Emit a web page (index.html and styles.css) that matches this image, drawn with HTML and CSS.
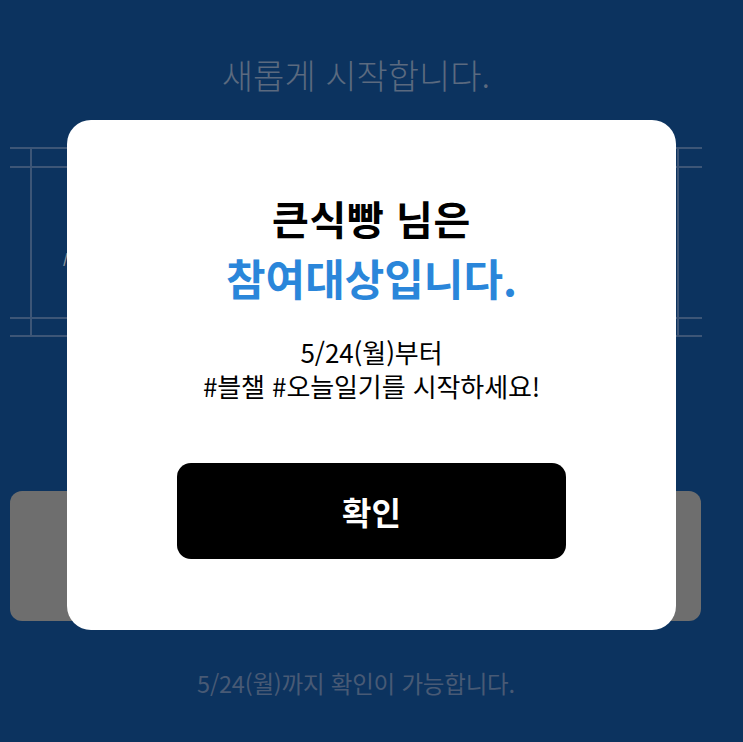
FILE: index.html
```html
<!DOCTYPE html>
<html lang="ko">
<head>
<meta charset="utf-8">
<link rel="stylesheet" href="styles.css">
</head>
<body>
<main class="page">
  <h2 class="headline">새롭게 시작합니다.</h2>
  <section class="frame">
    <div class="frame-inner">
      <span class="peek">/</span>
    </div>
  </section>
  <div class="ghost-button"></div>
  <p class="footnote">5/24(월)까지 확인이 가능합니다.</p>
</main>

<div class="overlay">
  <div class="modal">
    <h1 class="modal-title">
      <span class="line-black">큰식빵 님은</span>
      <span class="line-blue">참여대상입니다.</span>
    </h1>
    <p class="modal-text">5/24(월)부터<br>#블챌 #오늘일기를 시작하세요!</p>
    <button class="confirm">확인</button>
  </div>
</div>
</body>
</html>
```

FILE: styles.css
```css
* { box-sizing: border-box; }
html, body {
  margin: 0;
  padding: 0;
  background: #0c335f;
  font-family: "Noto Sans CJK KR", "Noto Sans", sans-serif;
}
body { width: 743px; height: 742px; overflow: hidden; }

.page {
  width: 712px;
  display: flex;
  flex-direction: column;
  padding: 0 10px;
}

.headline {
  margin: 55px 0 0;
  text-align: center;
  font-size: 34px;
  line-height: 40px;
  font-weight: 300;
  color: #5b6a7f;
}

.frame {
  position: relative;
  margin-top: 52px;
  height: 190px;
  border-top: 2px solid #3d5677;
  border-bottom: 2px solid #3d5677;
  padding-top: 17px;
}
.frame::before {
  content: "";
  position: absolute;
  top: -2px;
  bottom: -2px;
  left: 20px;
  right: 23px;
  border-left: 2px solid #3d5677;
  border-right: 2px solid #3d5677;
}
.frame-inner {
  height: 153px;
  border-top: 2px solid #3d5677;
  border-bottom: 2px solid #3d5677;
  position: relative;
}
.peek {
  position: absolute;
  left: 53px;
  top: 84px;
  font-size: 13px;
  line-height: 13px;
  font-weight: 700;
  color: #8e949c;
}

.ghost-button {
  margin-top: 154px;
  width: 691px;
  height: 130px;
  border-radius: 12px;
  background: #6e6e6e;
}

.footnote {
  margin: 47px 0 0;
  text-align: center;
  font-size: 23.5px;
  line-height: 30px;
  font-weight: 400;
  color: #485a75;
  letter-spacing: -0.2px;
}

.overlay {
  position: fixed;
  inset: 0;
  display: flex;
  justify-content: center;
  align-items: flex-start;
}
.modal {
  margin-top: 120px;
  width: 609px;
  height: 510px;
  background: #ffffff;
  border-radius: 24px;
  padding-top: 69px;
  display: flex;
  flex-direction: column;
  align-items: center;
}
.modal-title {
  margin: 0;
  display: flex;
  flex-direction: column;
  align-items: center;
  font-weight: 700;
  line-height: 59px;
}
.line-black { font-size: 40px; color: #000; letter-spacing: 0.6px; }
.line-blue { font-size: 43px; color: #2a86da; }

.modal-text {
  margin: 28px 0 0;
  text-align: center;
  font-size: 26px;
  line-height: 34px;
  color: #000;
  letter-spacing: -0.1px;
}

.confirm {
  margin-top: 60px;
  width: 389px;
  height: 96px;
  border: 0;
  border-radius: 14px;
  background: #000;
  color: #fff;
  font-family: inherit;
  font-size: 32px;
  font-weight: 700;
}
```
